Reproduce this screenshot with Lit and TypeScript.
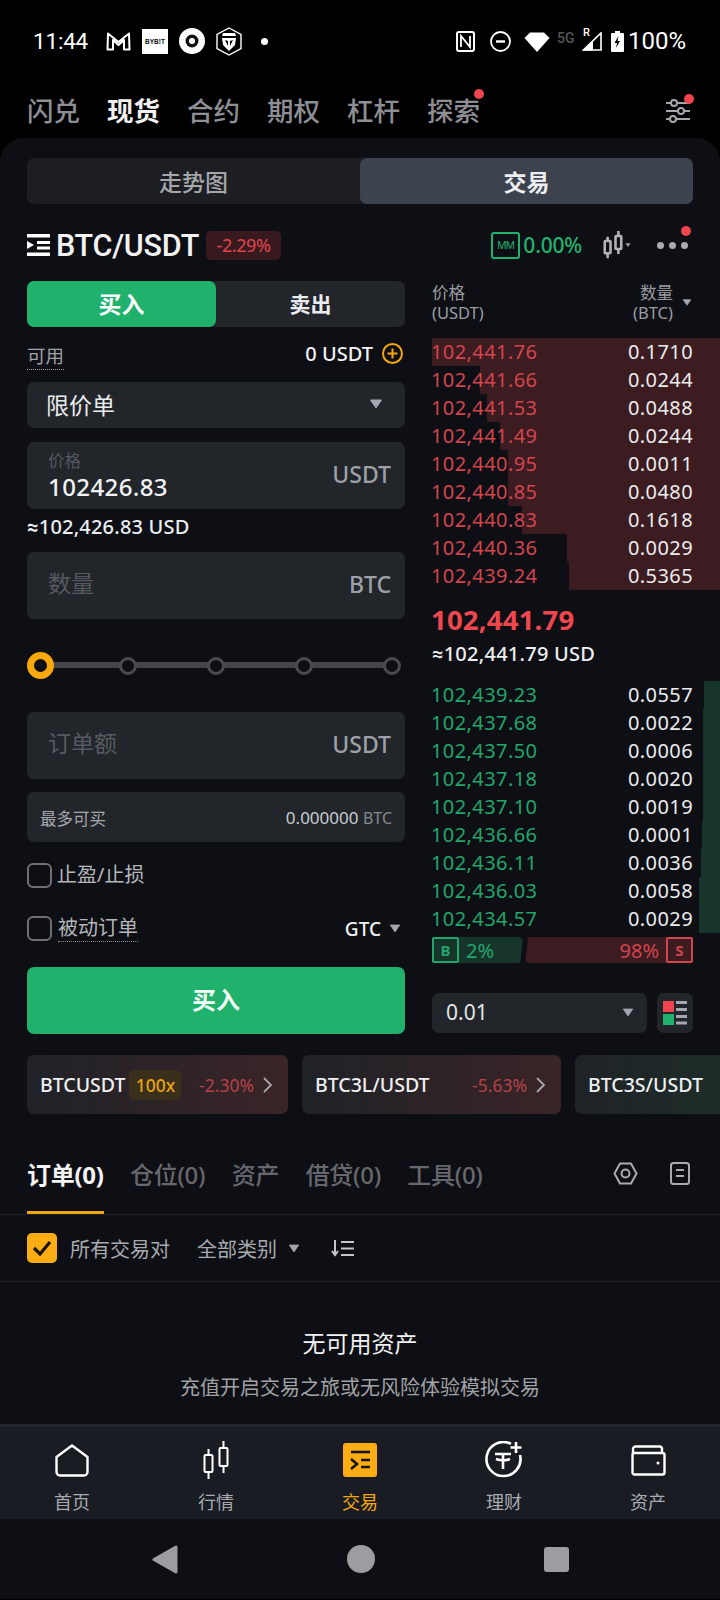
import { LitElement, html, css, svg } from "lit";
import { customElement } from "lit/decorators.js";

const asks = [
  ["102,441.76", "0.1710", 288], ["102,441.66", "0.0244", 240], ["102,441.53", "0.0488", 233],
  ["102,441.49", "0.0244", 220], ["102,440.95", "0.0011", 212], ["102,440.85", "0.0480", 212],
  ["102,440.83", "0.1618", 198], ["102,440.36", "0.0029", 153], ["102,439.24", "0.5365", 151],
] as const;
const bids = [
  ["102,439.23", "0.0557", 16], ["102,437.68", "0.0022", 17], ["102,437.50", "0.0006", 17],
  ["102,437.18", "0.0020", 17], ["102,437.10", "0.0019", 17], ["102,436.66", "0.0001", 18],
  ["102,436.11", "0.0036", 19], ["102,436.03", "0.0058", 21], ["102,434.57", "0.0029", 21],
] as const;

const caret = (w = 14, h = 10, c = "#a4a7ad") => html`<svg width=${w} height=${h} viewBox="0 0 14 10"><path d="M1.5 1h11L7 9z" fill=${c} stroke=${c} stroke-linejoin="round"/></svg>`;
const candles = (w: number, h: number, sw: number) => html`<svg width=${w} height=${h} viewBox="0 0 26 39" fill="none" stroke="currentColor" stroke-width=${sw}>
  <rect x="1.5" y="14" width="8" height="17" rx="1"/><path d="M5.5 8v6M5.5 31v7"/>
  <rect x="16.5" y="7" width="8" height="18" rx="1"/><path d="M20.5 0v7M20.5 25v7"/></svg>`;
const tradeGlyph = (c: string, sw: number) => svg`<path d="M8 9h19" stroke=${c} stroke-width=${sw}/><path d="M8 16l6 5-6 5" stroke=${c} stroke-width=${sw} fill="none"/><path d="M18 17h9M18 24h9" stroke=${c} stroke-width=${sw}/>`;

@customElement("app-root")
export class AppRoot extends LitElement {
  static styles = css`
    :host { display: block; width: 720px; height: 1600px; background: #000; color: #eaecef; overflow: hidden;
      font-family: "Noto Sans", "Noto Sans CJK SC", sans-serif; }
    * { box-sizing: border-box; }
    svg { display: block; flex: none; }
    .status { height: 80px; display: flex; align-items: center; padding: 2px 34px 0 33px; font-family: Roboto, "Noto Sans", sans-serif; color: #fff; }
    .status .time { font-size: 22.5px; letter-spacing: -.2px; width: 73px; }
    .sl { display: flex; align-items: center; gap: 11px; }
    .sr { display: flex; align-items: center; margin-left: auto; }
    .bybit { width: 26px; height: 25px; background: #fff; color: #111; font: 700 6.5px/25px "Liberation Sans", sans-serif; text-align: center; }
    .dot { width: 7px; height: 7px; border-radius: 50%; background: #fff; margin-left: 8px; }
    .fiveg { font-size: 14px; color: #555; margin: 0 6px 7px 7px; font-weight: 500; width: 19px; }
    .pct { font-size: 24px; margin-left: 4px; }
    .nfc { margin-right: 15px; } .dnd { margin-right: 13px; } .batt { margin-left: 9px; }
    .sig { position: relative; }
    .sig span { position: absolute; left: 1px; top: -5px; font-size: 11px; line-height: 12px; font-weight: 500; }

    .top { height: 58px; display: flex; align-items: center; padding: 4px 30px 0 27px; gap: 27px; font-size: 26.5px; color: #8d8f94; font-weight: 500; }
    .top span { position: relative; line-height: 40px; width: 53px; white-space: nowrap; }
    .top .on { color: #f1f1f1; font-weight: 700; }
    .reddot { position: absolute; width: 10px; height: 10px; border-radius: 50%; background: #f0454e; }
    .top .reddot { right: -4px; top: -2px; }
    .filt { margin-left: auto; position: relative; color: #a4a7ad; }
    .filt .reddot { right: -4px; top: -5px; }

    .panel { height: 1287px; background: #0e0f14; border-radius: 24px 24px 0 0; padding-top: 20px; }
    .seg { margin: 0 27px; height: 46px; display: flex; background: #1c1e23; border-radius: 7px; font-size: 23px; font-weight: 500; }
    .seg div { flex: 1; display: flex; align-items: center; justify-content: center; color: #a4a6aa; border-radius: 7px; }
    .seg .on { background: #3d434e; color: #eceef1; font-weight: 700; }

    .pair { height: 77px; padding: 5px 32px 0 27px; display: flex; align-items: center; position: relative; }
    .pname { font-size: 30.5px; font-weight: 500; margin-left: 6px; color: #f2f2f2; letter-spacing: -.25px; font-family: Roboto, sans-serif; }
    .chg { margin-left: 7px; height: 29px; width: 75px; border-radius: 5px; background: #381a1e; color: #e0454e; font-size: 18px; display: flex; align-items: center; justify-content: center; letter-spacing: -.4px; }
    .mm { margin-left: auto; width: 29px; height: 27px; border: 2px solid #22b26f; border-radius: 3px; color: #22b26f; font-size: 11px; line-height: 23px; text-align: center; letter-spacing: -.5px; font-family: "Liberation Sans", sans-serif; }
    .zero { color: #22b26f; font-size: 21px; font-weight: 500; margin: 0 21px 0 3px; letter-spacing: -.2px; }
    .candle { color: #b0b2b6; display: flex; align-items: center; gap: 2px; }
    .dots { display: flex; gap: 5px; margin-left: 26px; position: relative; }
    .dots i { width: 7px; height: 7px; border-radius: 50%; background: #a8aaae; }
    .dots .reddot { right: -3px; top: -16px; }

    .main { display: flex; gap: 27px; padding-left: 27px; height: 753px; }
    .left { width: 378px; display: flex; flex-direction: column; flex: none; }
    .toggle { height: 46px; background: #22252a; border-radius: 7px; display: flex; font-size: 21px; font-weight: 700; flex: none; }
    .toggle div { flex: 1; display: flex; align-items: center; justify-content: center; border-radius: 7px; padding-bottom: 2px; }
    .toggle .buy { flex: 0 0 189px; background: #20b26c; color: #fff; font-size: 23px; }
    .avail { height: 55px; display: flex; align-items: center; justify-content: space-between; padding: 4px 0 0; flex: none; }
    .dotted { border-bottom: 1px dotted #a0a2a6; line-height: 26px; }
    .avail .lbl { font-size: 18.5px; color: #a0a2a6; }
    .avail .val { display: flex; align-items: center; gap: 9px; font-size: 20px; font-weight: 500; margin: -6px 2px 0 0; color: #f2f2f2; }
    .box { background: #22262b; border-radius: 7px; display: flex; align-items: center; flex: none; }
    .sel { height: 46px; padding: 0 22px 2px 19px; justify-content: space-between; font-size: 23px; color: #eaecef; }
    .inp { height: 67px; padding: 0 14px 0 21px; justify-content: space-between; }
    .inp .ph { font-size: 23px; color: #565a60; margin-top: -8px; }
    .inp .unit { font-size: 23px; color: #9da1a7; font-weight: 500; margin-top: -3px; }
    .stack { display: flex; flex-direction: column; padding-top: 3px; }
    .stack small { font-size: 16.5px; line-height: 20px; color: #555960; margin-top: -1px; }
    .stack b { font-size: 24px; line-height: 32px; font-weight: 500; color: #f2f3f5; letter-spacing: .4px; }
    .price { margin-top: 14px; }
    .approx { height: 43px; display: flex; align-items: center; font-size: 20px; font-weight: 500; color: #eceef0; flex: none; padding-bottom: 8px; letter-spacing: .2px; }
    .ae { font-family: Roboto, sans-serif; font-weight: 700; }
    .slider { height: 93px; display: flex; align-items: center; justify-content: space-between; padding: 0 4px 0 0; position: relative; flex: none; }
    .slider::before { content: ""; position: absolute; left: 10px; right: 10px; top: 43px; height: 6px; background: #45464a; }
    .knob { width: 18px; height: 18px; border: 3px solid #4a4b4f; border-radius: 50%; background: #0e0f14; position: relative; }
    .knob.first { width: 27px; height: 27px; border: 7px solid #f6a80d; margin-right: -5px; }
    .maxr { height: 50px; margin-top: 13px; padding: 0 13px 0 13px; justify-content: space-between; }
    .maxr .a { font-size: 16.5px; color: #a4a7ab; padding-top: 2px; }
    .maxr .b { font-size: 17px; color: #c9ccd0; }
    .maxr .b span { color: #85888d; font-size: 16px; }
    .chk { height: 53px; display: flex; align-items: center; flex: none; font-size: 20px; color: #b4b6ba; }
    .chk.first { margin-top: 7px; }
    .chk i { width: 25px; height: 25px; border: 2px solid #6e7074; border-radius: 6px; margin-right: 5px; }
    .chk span { position: relative; top: -2px; }
    .chk .dotted { line-height: 27px; border-color: #888; }
    .chk span.dotted { top: -1px; margin-left: 1px; }
    .chk span.gtc { margin-left: auto; display: flex; align-items: center; gap: 8px; font-size: 19px; font-weight: 500; color: #f0f0f0; padding-right: 4px; top: 0; }
    .buybtn { height: 67px; background: #20b26c; border-radius: 7px; margin-top: 12px; display: flex; align-items: center; justify-content: center; font-size: 24px; font-weight: 700; color: #f3fbf6; flex: none; padding-bottom: 4px; }

    .right { flex: 1; min-width: 0; }
    .bh { height: 57px; display: flex; justify-content: space-between; padding: 2px 27px 0 0; font-size: 16.5px; color: #9a9da2; position: relative; }
    .bh > div { line-height: 20px; padding-top: 0; }
    .bh .r { text-align: right; padding-right: 20px; }
    .bh .r span { display: block; }
    .bh svg { position: absolute; right: 28px; top: 18px; }
    .row { height: 28px; display: flex; align-items: center; justify-content: space-between; padding: 0 27px 1px 0; font-size: 20px; letter-spacing: .42px; position: relative; color: #ebecee; }
    .row .bar { position: absolute; right: 0; top: 0; bottom: 0; }
    .row span { position: relative; }
    .row .p { margin-left: -1px; }
    .ask .p { color: #d4444d; } .ask .bar { background: #3c1c20; }
    .bid .p { color: #22a56a; } .bid .bar { background: #17352a; }
    .last { height: 91px; display: flex; flex-direction: column; }
    .last b { font-size: 27.5px; font-weight: 700; color: #f0474f; line-height: 36px; margin: 12px 0 0 -1px; letter-spacing: .2px; }
    .last span { font-size: 20px; font-weight: 500; line-height: 32px; color: #eceef0; letter-spacing: .25px; }
    .ratio { margin: 4px 27px 0 0; height: 26px; display: flex; font-size: 20px; gap: 2px; align-items: stretch; }
    .ratio .g { width: 91px; background: #17352a; color: #22a56a; display: flex; align-items: center; gap: 7px; border-radius: 3px 5px 5px 3px; clip-path: polygon(0 0, 100% 0, 97% 100%, 0 100%); }
    .ratio .rd { flex: 1; background: #3c1c20; color: #d4444d; display: flex; align-items: center; justify-content: flex-end; gap: 7px; border-radius: 5px 3px 3px 5px; clip-path: polygon(2% 0, 100% 0, 100% 100%, 0 100%); }
    .ratio em { width: 27px; height: 26px; border: 2px solid; border-radius: 2px; font-size: 15px; font-style: normal; font-weight: 700; display: flex; align-items: center; justify-content: center; }
    .ratio .g em { border-color: #22a56a; } .ratio .rd em { border-color: #d4444d; }
    .prec { margin: 30px 27px 0 0; height: 40px; display: flex; gap: 10px; }
    .prec .box:first-child { flex: 1; padding: 0 13px 2px 14px; justify-content: space-between; font-size: 21px; color: #e4e5e7; }
    .prec .ic { width: 36px; justify-content: center; }

    .cards { margin-top: 21px; height: 59px; padding-left: 27px; display: flex; gap: 14px; overflow: hidden; }
    .card { flex: 0 0 auto; height: 59px; border-radius: 7px; background: linear-gradient(90deg, #1f2227, #3a2427); display: flex; align-items: center; padding: 0 16px 0 13px; font-size: 19.5px; font-weight: 500; color: #eff0f2; }
    .card.c1 { width: 261px; } .card.c2 { width: 259px; } .card.c3 { width: 200px; background: linear-gradient(90deg, #1f2227, #1d3029); }
    .lev { margin-left: 4px; height: 30px; width: 52px; background: #3a2f1a; border-radius: 5px; color: #e8a312; display: flex; align-items: center; justify-content: center; font-size: 17.5px; font-weight: 500; }
    .cpct { margin-left: auto; color: #b5424a; font-size: 17.5px; font-weight: 400; margin-right: 9px; }

    .otabs { height: 101px; border-bottom: 1px solid #1b1d22; display: flex; padding: 0 27px; gap: 26.5px; font-size: 24px; color: #66686d; font-weight: 500; }
    .otabs > div { height: 100px; display: flex; align-items: flex-end; padding-bottom: 23px; position: relative; letter-spacing: -.3px; }
    .otabs .on { color: #f3f3f3; font-weight: 700; }
    .otabs .on::after { content: ""; position: absolute; left: 0; right: 0; bottom: 0; height: 3px; background: #f0a70f; }
    .oicons { margin: 0 3px 0 auto; display: flex; align-items: flex-end; gap: 32px; padding-bottom: 29px; color: #a8abb0; }
    .filter { height: 67px; border-bottom: 1px solid #1b1d22; display: flex; align-items: center; padding-left: 27px; font-size: 20px; color: #a8aaae; }
    .tick { width: 30px; height: 30px; background: #fcad14; border-radius: 5px; display: flex; align-items: center; justify-content: center; margin-right: 13px; }
    .cat { margin-left: 27px; display: flex; align-items: center; gap: 11px; }
    .sort { margin-left: 31px; }
    .empty { height: 143px; display: flex; flex-direction: column; align-items: center; }
    .empty b { font-weight: 400; font-size: 23px; line-height: 30px; margin-top: 46px; color: #f1f2f3; }
    .empty span { font-size: 20px; line-height: 30px; margin-top: 15px; color: #a0a2a6; }

    .nav { height: 95px; background: #1a1c24; border-top: 3px solid #24262d; display: flex; margin-top: -1px; }
    .nav > div { flex: 1; display: flex; flex-direction: column; align-items: center; font-size: 18px; color: #a8abb0; }
    .nav .ico { height: 48px; margin-top: 9px; display: flex; align-items: center; justify-content: center; color: #fff; }
    .nav .lab { line-height: 26px; margin-top: 5px; }
    .nav .on { color: #f0a70f; }
    .sys { height: 80px; background: #0e0f14; display: flex; align-items: center; justify-content: center; gap: 169px; }
  `;

  private row(r: readonly [string, string, number], cls: string) {
    return html`<div class="row ${cls}"><div class="bar" style="width:${r[2]}px"></div><span class="p">${r[0]}</span><span>${r[1]}</span></div>`;
  }

  render() {
    return html`
      <div class="status">
        <div class="time">11:44</div>
        <div class="sl">
          <svg width="25" height="19" viewBox="0 0 25 19" fill="none" stroke="#fff" stroke-width="2" stroke-linejoin="round"><path d="M2 1.5 12.5 10 23 1.5 23.5 17.5H18V8L12.5 13 7 8V17.5H1.5Z"/></svg>
          <div class="bybit">BYB!T</div>
          <svg width="26" height="26" viewBox="0 0 26 26"><circle cx="13" cy="13" r="13" fill="#fff"/><circle cx="13" cy="13" r="6.5" fill="#111"/><circle cx="13" cy="13" r="3" fill="#fff"/></svg>
          <svg width="26" height="29" viewBox="0 0 26 29" fill="none"><path d="M13 1 25 7.500v14L13 28 1 21.500v-14z" stroke="#fff" stroke-width="1.400"/><path d="M7 6h12l1 3H6zM6 11h14l-1 7-6 6-6-6z" fill="#fff"/><path d="M9 13l3 1v5zM17 13l-3 1v5z" fill="#000"/></svg>
          <div class="dot"></div>
        </div>
        <div class="sr">
          <svg class="nfc" width="19" height="21" viewBox="0 0 19 21" fill="none" stroke="#fff" stroke-width="2"><rect x="1" y="1" width="17" height="19" rx="2"/><path d="M5 16V5l9 11V5" stroke-width="1.800"/></svg>
          <svg class="dnd" width="21" height="21" viewBox="0 0 21 21" fill="none" stroke="#fff" stroke-width="1.800"><circle cx="10.500" cy="10.500" r="9.500"/><path d="M6 10.500h9" stroke-width="2.400"/></svg>
          <svg width="26" height="21" viewBox="0 0 26 21"><path d="M13 21 0.500 7 6 1.500h14L25.500 7z" fill="#fff"/></svg>
          <div class="fiveg">5G</div>
          <div class="sig"><span>R</span><svg width="20" height="19" viewBox="0 0 20 19" fill="none"><path d="M19 1v17H1.500z" stroke="#fff" stroke-width="1.600"/><path d="M11 9v9.500H1z" fill="#fff"/></svg></div>
          <svg class="batt" width="13" height="21" viewBox="0 0 13 21"><path d="M4 0h5v2h3a1 1 0 0 1 1 1v17a1 1 0 0 1-1 1H1a1 1 0 0 1-1-1V3a1 1 0 0 1 1-1h3z" fill="#fff"/><path d="M7.500 5 3.500 12h2.500l-1 5 4-7H6.500z" fill="#000"/></svg>
          <div class="pct">100%</div>
        </div>
      </div>

      <div class="top">
        <span>闪兑</span><span class="on">现货</span><span>合约</span><span>期权</span><span>杠杆</span>
        <span>探索<i class="reddot"></i></span>
        <div class="filt">
          <svg width="24" height="24" viewBox="0 0 24 24" fill="none" stroke="currentColor" stroke-width="2"><path d="M0 4h5M11 4h13M0 12h12M18 12h6M0 20h4M10 20h14"/><circle cx="8" cy="4" r="3"/><circle cx="15" cy="12" r="3"/><circle cx="7" cy="20" r="3"/></svg>
          <i class="reddot"></i>
        </div>
      </div>

      <div class="panel">
        <div class="seg"><div>走势图</div><div class="on">交易</div></div>
        <div class="pair">
          <svg width="23" height="22" viewBox="0 0 23 22" fill="#fff"><rect width="23" height="3.500"/><rect y="18.500" width="23" height="3.500"/><path d="M0 7l7 4-7 4z"/><rect x="10" y="7" width="13" height="3"/><rect x="10" y="12.500" width="13" height="3"/></svg>
          <span class="pname">BTC/USDT</span>
          <span class="chg">-2.29%</span>
          <span class="mm">MM</span>
          <span class="zero">0.00%</span>
          <span class="candle">${candles(20, 28, 3.6)}${caret(6, 4)}</span>
          <div class="dots"><i></i><i></i><i></i><b class="reddot"></b></div>
        </div>

        <div class="main">
          <div class="left">
            <div class="toggle"><div class="buy">买入</div><div>卖出</div></div>
            <div class="avail">
              <span class="lbl dotted">可用</span>
              <span class="val">0 USDT
                <svg width="21" height="21" viewBox="0 0 21 21" fill="none" stroke="#f6a80d" stroke-width="2"><circle cx="10.500" cy="10.500" r="9.500"/><path d="M10.500 5.500v10M5.500 10.500h10"/></svg>
              </span>
            </div>
            <div class="box sel"><span>限价单</span>${caret()}</div>
            <div class="box inp price">
              <div class="stack"><small>价格</small><b>102426.83</b></div><span class="unit">USDT</span>
            </div>
            <div class="approx"><span class="ae">≈</span>102,426.83 USD</div>
            <div class="box inp"><span class="ph">数量</span><span class="unit">BTC</span></div>
            <div class="slider">
              <i class="knob first"></i><i class="knob"></i><i class="knob"></i><i class="knob"></i><i class="knob"></i>
            </div>
            <div class="box inp"><span class="ph">订单额</span><span class="unit">USDT</span></div>
            <div class="box maxr"><span class="a">最多可买</span><span class="b">0.000000 <span>BTC</span></span></div>
            <div class="chk first"><i></i><span>止盈/止损</span></div>
            <div class="chk"><i></i><span class="dotted">被动订单</span><span class="gtc">GTC ${caret(12, 9)}</span></div>
            <div class="buybtn">买入</div>
          </div>

          <div class="right">
            <div class="bh">
              <div>价格<br />(USDT)</div>
              <div class="r"><span>数量</span><span>(BTC)</span></div>
              ${caret(10, 7)}
            </div>
            ${asks.map((r) => this.row(r, "ask"))}
            <div class="last"><b>102,441.79</b><span><span class="ae">≈</span>102,441.79 USD</span></div>
            ${bids.map((r) => this.row(r, "bid"))}
            <div class="ratio">
              <div class="g"><em>B</em>2%</div>
              <div class="rd">98%<em>S</em></div>
            </div>
            <div class="prec">
              <div class="box"><span>0.01</span>${caret(12, 9)}</div>
              <div class="box ic">
                <svg width="24" height="24" viewBox="0 0 24 24"><rect width="11" height="11" fill="#f0454e"/><rect y="13" width="11" height="11" fill="#20b26c"/><path d="M13 1.500h11M13 8.500h11M13 15.500h11M13 22h11" stroke="#a4a7ad" stroke-width="3"/></svg>
              </div>
            </div>
          </div>
        </div>

        <div class="cards">
          <div class="card c1">BTCUSDT<span class="lev">100x</span><span class="cpct">-2.30%</span>
            <svg width="9" height="16" viewBox="0 0 9 16" fill="none" stroke="#a4a7ad" stroke-width="1.800"><path d="M1 1l7 7-7 7"/></svg></div>
          <div class="card c2">BTC3L/USDT<span class="cpct">-5.63%</span>
            <svg width="9" height="16" viewBox="0 0 9 16" fill="none" stroke="#a4a7ad" stroke-width="1.800"><path d="M1 1l7 7-7 7"/></svg></div>
          <div class="card c3">BTC3S/USDT</div>
        </div>

        <div class="otabs">
          <div class="on">订单(0)</div><div>仓位(0)</div><div>资产</div><div>借贷(0)</div><div>工具(0)</div>
          <span class="oicons">
            <svg width="25" height="23" viewBox="0 0 25 23" fill="none" stroke="currentColor" stroke-width="2"><path d="M7 1.500h11l5.500 10-5.500 10H7L1.500 11.500z" stroke-linejoin="round"/><circle cx="12.500" cy="11.500" r="4"/></svg>
            <svg width="20" height="23" viewBox="0 0 20 23" fill="none" stroke="currentColor" stroke-width="2"><rect x="1" y="1" width="18" height="21" rx="2.500"/><path d="M6 8h8M6 14h8"/></svg>
          </span>
        </div>

        <div class="filter">
          <div class="tick"><svg width="20" height="16" viewBox="0 0 20 16" fill="none" stroke="#1a1400" stroke-width="3.200"><path d="M2 8l6 6L18 2"/></svg></div>
          <span>所有交易对</span>
          <span class="cat">全部类别 ${caret(12, 9)}</span>
          <svg class="sort" width="23" height="17" viewBox="0 0 23 17" fill="none" stroke="#c4c6ca" stroke-width="2"><path d="M4 0v14M1 11l3 4 3-4"/><path d="M10 2h13M10 8.500h13M10 15h13"/></svg>
        </div>

        <div class="empty"><b>无可用资产</b><span>充值开启交易之旅或无风险体验模拟交易</span></div>
      </div>

      <div class="nav">
        <div><span class="ico"><svg width="34" height="33" viewBox="0 0 34 33" fill="none" stroke="#fff" stroke-width="2.400" stroke-linejoin="round"><path d="M17 1.500 32.500 13v15a3.500 3.500 0 0 1-3.500 3.500H5A3.500 3.500 0 0 1 1.500 28V13z"/></svg></span><span class="lab">首页</span></div>
        <div><span class="ico">${candles(26, 39, 2)}</span><span class="lab">行情</span></div>
        <div class="on"><span class="ico"><svg width="34" height="34" viewBox="0 0 34 34"><rect width="34" height="34" rx="3" fill="#fcad14"/>${tradeGlyph("#14151a", 2.6)}</svg></span><span class="lab">交易</span></div>
        <div><span class="ico"><svg width="38" height="38" viewBox="0 0 38 38" fill="none" stroke="#fff" stroke-width="2.600"><path d="M26 2.800A17 17 0 1 0 35 14"/><path d="M10 13h16M18 13v15M11 18c4 1.500 10 1.500 14 0"/><path d="M31 1v11M25.500 6.500h11"/></svg></span><span class="lab">理财</span></div>
        <div><span class="ico"><svg width="35" height="31" viewBox="0 0 35 31" fill="none" stroke="#fff" stroke-width="2.400"><path d="M2 8V4a2.500 2.500 0 0 1 2.500-2.500H29A2.500 2.500 0 0 1 31 4v4"/><rect x="1.500" y="8" width="32" height="21.500" rx="2"/><circle cx="27" cy="18" r="1.500" fill="#fff" stroke="none"/></svg></span><span class="lab">资产</span></div>
      </div>

      <div class="sys">
        <svg width="26" height="29" viewBox="0 0 26 29"><path d="M24 2v25L2 14.500z" fill="#9c9da1" stroke="#9c9da1" stroke-width="3" stroke-linejoin="round"/></svg>
        <svg width="28" height="28" viewBox="0 0 28 28"><circle cx="14" cy="14" r="14" fill="#9c9da1"/></svg>
        <svg width="25" height="25" viewBox="0 0 25 25"><rect width="25" height="25" rx="3" fill="#9c9da1"/></svg>
      </div>
    `;
  }
}
